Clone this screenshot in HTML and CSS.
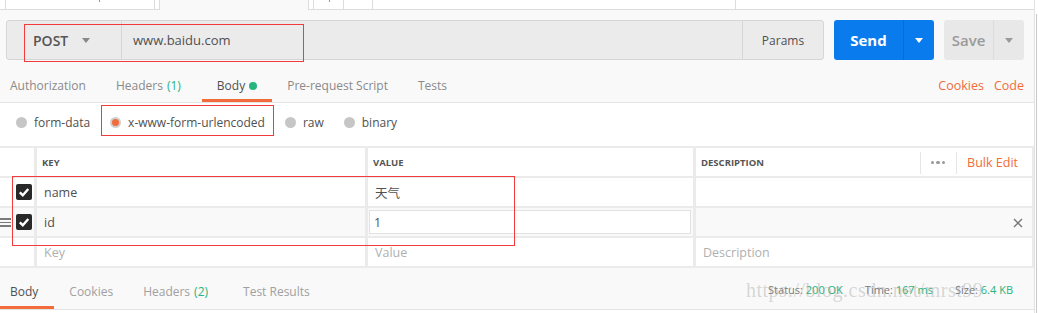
FILE: index.html
```html
<!DOCTYPE html>
<html lang="en">
<head>
    <meta charset="UTF-8">
    <title>Postman - POST www.baidu.com</title>
    <link rel="stylesheet" href="styles.css">
</head>
<body>
<div class="window">
    <div class="app">
        <!-- open request tabs, cut off at the top -->
        <div class="tab-strip">
            <div class="stab s1"></div>
            <div class="stab s2"><span class="tick"></span></div>
            <div class="stab s3"></div>
            <div class="stab active s4"></div>
            <div class="stab s5"></div>
            <div class="stab s6"><span class="tick"></span></div>
            <div class="stab s7"></div>
            <div class="stab s8"></div>
            <div class="stab rest"></div>
        </div>

        <div class="main">
            <div class="request-bar">
                <div class="url-group">
                    <div class="method">POST <span class="caret"></span></div>
                    <div class="url">www.baidu.com</div>
                    <div class="params">Params</div>
                </div>
                <div class="send-group">
                    <div class="send-label">Send</div>
                    <div class="send-drop"><span class="caret white"></span></div>
                </div>
                <div class="save-group">
                    <div class="save-label">Save</div>
                    <div class="save-drop"><span class="caret"></span></div>
                </div>
            </div>

            <div class="req-tabs">
                <div class="tab first">Authorization</div>
                <div class="tab">Headers <span class="count">(1)</span></div>
                <div class="tab active">Body <span class="dot"></span></div>
                <div class="tab">Pre-request Script</div>
                <div class="tab">Tests</div>
                <div class="links">
                    <span>Cookies</span>
                    <span>Code</span>
                </div>
            </div>
        </div>

        <div class="body-options">
            <label class="radio"><span class="circle"></span>form-data</label>
            <label class="radio"><span class="circle on"></span>x-www-form-urlencoded</label>
            <label class="radio"><span class="circle"></span>raw</label>
            <label class="radio"><span class="circle"></span>binary</label>
        </div>

        <div class="kv-table">
            <div class="cell"></div>
            <div class="cell head">KEY</div>
            <div class="cell head">VALUE</div>
            <div class="cell head desc-head">
                DESCRIPTION
                <div class="head-tools">
                    <span class="more"><i></i><i></i><i></i></span>
                    <span class="bulk">Bulk Edit</span>
                </div>
            </div>

            <div class="cell check-cell">
                <svg class="check" width="16" height="16" viewBox="0 0 16 16"><rect width="16" height="16" rx="2" fill="#282828"/><path d="M3.8 8.3 L6.8 11.2 L12.3 5" fill="none" stroke="#fff" stroke-width="2.4"/></svg>
            </div>
            <div class="cell">name</div>
            <div class="cell">天气</div>
            <div class="cell"></div>

            <div class="cell check-cell hover">
                <span class="handle"><i></i><i></i><i></i></span>
                <svg class="check" width="16" height="16" viewBox="0 0 16 16"><rect width="16" height="16" rx="2" fill="#282828"/><path d="M3.8 8.3 L6.8 11.2 L12.3 5" fill="none" stroke="#fff" stroke-width="2.4"/></svg>
            </div>
            <div class="cell hover">id</div>
            <div class="cell hover value-edit"><div class="input">1</div></div>
            <div class="cell hover remove">
                <svg width="10" height="10" viewBox="0 0 10 10"><path d="M1 1 L9 9 M9 1 L1 9" stroke="#777" stroke-width="1.4"/></svg>
            </div>

            <div class="cell"></div>
            <div class="cell placeholder">Key</div>
            <div class="cell placeholder">Value</div>
            <div class="cell placeholder">Description</div>
        </div>

        <div class="response">
            <div class="res-tab active">Body</div>
            <div class="res-tab">Cookies</div>
            <div class="res-tab">Headers <span class="count">(2)</span></div>
            <div class="res-tab results">Test Results</div>
            <div class="meta">
                <span>Status: <b>200 OK</b></span>
                <span>Time: <b>167 ms</b></span>
                <span>Size: <b>6.4 KB</b></span>
            </div>
        </div>
    </div>
    <div class="scroll-edge"></div>

    <!-- annotations drawn over the screenshot -->
    <div class="mark mark-url"></div>
    <div class="mark mark-type"></div>
    <div class="mark mark-rows"></div>
    <div class="watermark">https://blog.csdn.net/mrst99</div>
</div>
</body>
</html>
```

FILE: styles.css
```css
* {
    margin: 0;
    padding: 0;
    box-sizing: border-box;
}

body {
    font-family: "Open Sans", "Noto Sans CJK SC", sans-serif;
    font-size: 12px;
    color: #505050;
    background: #fff;
}

.window {
    position: relative;
    display: flex;
    width: 1038px;
    height: 313px;
    overflow: hidden;
}

.app {
    width: 1035px;
    border-right: 1px solid #e2e2e2;
}

.scroll-edge {
    width: 1px;
    margin: 14px 0 0 1px;
    background: #c9c9c9;
}

/* top tab strip */
.tab-strip {
    display: flex;
    height: 10px;
}

.stab {
    position: relative;
    background: #fff;
    border-right: 1px solid #dcdcdc;
    border-bottom: 1px solid #dcdcdc;
}

.stab.active {
    background: #f9f9f9;
    border-bottom: none;
}

.s1 { width: 6px; }
.s2 { width: 149px; }
.s3 { width: 5px; }
.s4 { width: 149px; }
.s5 { width: 5px; }
.s6 { width: 30px; }
.s7 { width: 29px; }
.s8 { width: 363px; }
.rest { flex: 1; border-right: none; }

.tick {
    position: absolute;
    left: 93px;
    top: 0;
    width: 1px;
    height: 2px;
    background: #999;
}

.s6 .tick { left: 15px; }

/* request bar */
.main {
    background: #f9f9f9;
}

.request-bar {
    display: flex;
    gap: 10px;
    padding: 10px 0 0 6px;
}

.url-group {
    display: flex;
    width: 818px;
    height: 40px;
    background: #ebebeb;
    border: 1px solid #d6d6d6;
    border-radius: 3px;
}

.method {
    display: flex;
    align-items: center;
    width: 115px;
    padding-left: 26px;
    border-right: 1px solid #d6d6d6;
    font-size: 14px;
    font-weight: 600;
    color: #555;
}

.caret {
    display: inline-block;
    margin-left: 14px;
    border-left: 4px solid transparent;
    border-right: 4px solid transparent;
    border-top: 5px solid #888;
}

.caret.white {
    margin: 0;
    border-top-color: #fff;
}

.url {
    flex: 1;
    display: flex;
    align-items: center;
    padding-left: 11px;
    font-size: 13px;
}

.params {
    display: flex;
    align-items: center;
    justify-content: center;
    width: 81px;
    border-left: 1px solid #d6d6d6;
    font-size: 12px;
}

.send-group {
    display: flex;
    width: 100px;
    height: 40px;
    background: #097bed;
    border-radius: 3px;
    color: #fff;
}

.send-label {
    display: flex;
    align-items: center;
    justify-content: center;
    width: 69px;
    font-size: 15px;
    font-weight: 700;
}

.send-drop {
    display: flex;
    align-items: center;
    justify-content: center;
    flex: 1;
    border-left: 1px solid #0a6cd0;
}

.save-group {
    display: flex;
    width: 80px;
    height: 40px;
    background: #e8e8e8;
    border-radius: 3px;
    color: #9a9a9a;
}

.save-label {
    display: flex;
    align-items: center;
    justify-content: center;
    width: 49px;
    font-size: 15px;
    font-weight: 600;
}

.save-drop {
    display: flex;
    align-items: center;
    justify-content: center;
    flex: 1;
    border-left: 1px solid #dcdcdc;
}

.save-drop .caret {
    margin: 0;
    border-top-color: #999;
}

/* request tabs */
.req-tabs {
    display: flex;
    height: 43px;
    border-bottom: 1px solid #e4e4e4;
}

.tab {
    display: flex;
    align-items: center;
    gap: 4px;
    padding: 12px 15px 0;
    border-bottom: 3px solid transparent;
    font-size: 12px;
    color: #8a8a8a;
}

.tab.first { padding-left: 10px; }

.tab.active {
    margin-left: 6px;
    color: #505050;
    border-bottom-color: #f26b3a;
}

.count { color: #26b47f; }

.dot {
    width: 8px;
    height: 8px;
    border-radius: 50%;
    background: #26b47f;
}

.links {
    display: flex;
    align-items: center;
    gap: 10px;
    margin-left: auto;
    padding: 9px 10px 0 0;
    font-size: 12.5px;
    color: #f26b3a;
}

/* body type radios */
.body-options {
    display: flex;
    align-items: center;
    gap: 20px;
    height: 43px;
    padding: 0 0 5px 16px;
    background: #fff;
    font-size: 12px;
}

.radio {
    display: flex;
    align-items: center;
    gap: 7px;
}

.circle {
    width: 11px;
    height: 11px;
    border-radius: 50%;
    background: #c6c6c6;
}

.circle.on {
    background: #f26b3a;
    border: 2px solid #cfcfcf;
}

/* key / value table */
.kv-table {
    display: grid;
    grid-template-columns: 34px 328px 325px 336px;
    grid-auto-rows: 28px;
    column-gap: 3px;
    row-gap: 2px;
    padding: 2px 2px 2px 0;
    background: #ebebeb;
}

.cell {
    position: relative;
    display: flex;
    align-items: center;
    padding: 1px 0 0 7px;
    background: #fff;
    font-size: 12.5px;
}

.cell.hover { background: #f9f9f9; }

.head {
    padding-left: 5px;
    font-size: 9.5px;
    font-weight: 700;
    color: #555;
}

.head-tools {
    display: flex;
    align-items: center;
    margin-left: auto;
    height: 100%;
}

.more {
    display: flex;
    gap: 2px;
    align-items: center;
    height: 22px;
    padding: 0 11px 0 10px;
    border-left: 1px solid #e6e6e6;
    border-right: 1px solid #e6e6e6;
}

.more i {
    width: 3.5px;
    height: 3.5px;
    border-radius: 50%;
    background: #9a9a9a;
}

.bulk {
    padding: 0 14px 0 10px;
    font-size: 12.5px;
    font-weight: 400;
    color: #f26b3a;
}

.check-cell {
    padding: 0 0 0 16px;
}

.handle {
    position: absolute;
    left: 0;
    top: 10px;
    display: flex;
    flex-direction: column;
    gap: 2px;
}

.handle i {
    width: 11px;
    height: 1.5px;
    background: #7a7a7a;
}

.value-edit {
    padding: 2px 2px 2px 1px;
}

.input {
    display: flex;
    align-items: center;
    width: 100%;
    height: 100%;
    padding-left: 4px;
    background: #fff;
    border: 1px solid #e2e2e2;
}

.remove {
    justify-content: flex-end;
    padding-right: 9px;
}

.placeholder {
    color: #b0b0b0;
}

/* response bar */
.response {
    display: flex;
    height: 42px;
    background: #f9f9f9;
    border-bottom: 1px solid #e4e4e4;
}

.res-tab {
    display: flex;
    align-items: center;
    gap: 4px;
    padding: 8px 15px 0;
    border-bottom: 3px solid transparent;
    font-size: 12px;
    color: #a0a0a0;
}

.res-tab:first-child {
    padding: 8px 16px 0 10px;
}

.res-tab.results { margin-left: 5px; }

.res-tab.active {
    color: #505050;
    border-bottom-color: #f26b3a;
}

.meta {
    display: flex;
    align-items: center;
    gap: 22px;
    margin-left: auto;
    padding: 2px 21px 0 0;
    font-size: 11px;
    color: #7a7a7a;
}

.meta b {
    font-weight: 400;
    color: #26b47f;
}

/* red annotation boxes */
.mark {
    position: absolute;
    border: 1px solid #f23c3c;
}

.mark-url { left: 24px; top: 24px; width: 280px; height: 38px; }
.mark-type { left: 101px; top: 105px; width: 173px; height: 31px; }
.mark-rows { left: 12px; top: 176px; width: 503px; height: 70px; }

.watermark {
    position: absolute;
    left: 746px;
    top: 279px;
    font-family: "Liberation Serif", serif;
    font-size: 20px;
    letter-spacing: 0.5px;
    color: rgba(160, 160, 160, 0.4);
}
```
